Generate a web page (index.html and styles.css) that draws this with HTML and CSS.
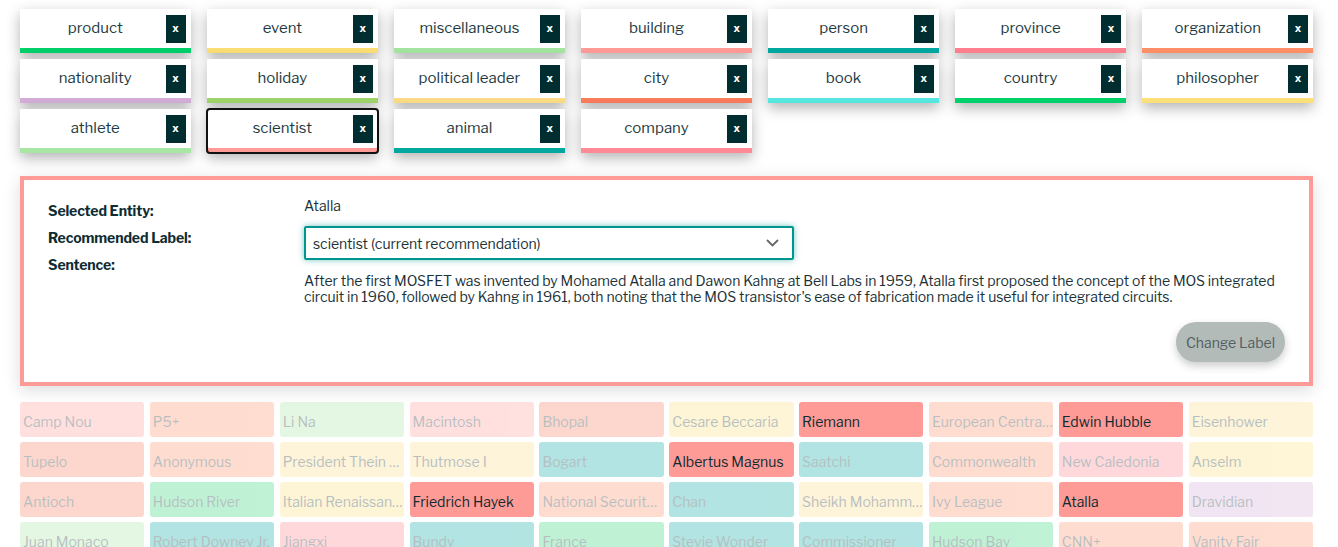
FILE: index.html
```html
<!DOCTYPE html>
<html lang="en">
<head>
<meta charset="utf-8">
<title>Entity Labeler</title>
<link rel="stylesheet" href="styles.css">
</head>
<body>
<div class="page">
  <div class="chips">
    <div class="chip c-product"><span class="chip-label">product</span><span class="chip-x">x</span></div>
    <div class="chip c-event"><span class="chip-label">event</span><span class="chip-x">x</span></div>
    <div class="chip c-misc"><span class="chip-label">miscellaneous</span><span class="chip-x">x</span></div>
    <div class="chip c-building"><span class="chip-label">building</span><span class="chip-x">x</span></div>
    <div class="chip c-person"><span class="chip-label">person</span><span class="chip-x">x</span></div>
    <div class="chip c-province"><span class="chip-label">province</span><span class="chip-x">x</span></div>
    <div class="chip c-organization"><span class="chip-label">organization</span><span class="chip-x">x</span></div>
    <div class="chip c-nationality"><span class="chip-label">nationality</span><span class="chip-x">x</span></div>
    <div class="chip c-holiday"><span class="chip-label">holiday</span><span class="chip-x">x</span></div>
    <div class="chip c-political"><span class="chip-label">political leader</span><span class="chip-x">x</span></div>
    <div class="chip c-city"><span class="chip-label">city</span><span class="chip-x">x</span></div>
    <div class="chip c-book"><span class="chip-label">book</span><span class="chip-x">x</span></div>
    <div class="chip c-country"><span class="chip-label">country</span><span class="chip-x">x</span></div>
    <div class="chip c-philosopher"><span class="chip-label">philosopher</span><span class="chip-x">x</span></div>
    <div class="chip c-athlete"><span class="chip-label">athlete</span><span class="chip-x">x</span></div>
    <div class="chip c-scientist selected"><span class="chip-label">scientist</span><span class="chip-x">x</span></div>
    <div class="chip c-animal"><span class="chip-label">animal</span><span class="chip-x">x</span></div>
    <div class="chip c-company"><span class="chip-label">company</span><span class="chip-x">x</span></div>
  </div>

  <div class="panel">
    <div class="panel-labels">
      <div class="plabel">Selected Entity:</div>
      <div class="plabel">Recommended Label:</div>
      <div class="plabel">Sentence:</div>
    </div>
    <div class="panel-body">
      <div class="entity">Atalla</div>
      <div class="select">
        <span class="select-text">scientist (current recommendation)</span>
        <svg class="chev" width="13" height="8" viewBox="0 0 13 8"><polyline points="1,1 6.5,6.5 12,1" fill="none" stroke="#666" stroke-width="1.8"/></svg>
      </div>
      <p class="sentence">After the first MOSFET was invented by Mohamed Atalla and Dawon Kahng at Bell Labs in 1959, Atalla first proposed the concept of the MOS integrated circuit in 1960, followed by Kahng in 1961, both noting that the MOS transistor's ease of fabrication made it useful for integrated circuits.</p>
      <div class="actions"><button class="btn">Change Label</button></div>
    </div>
  </div>

  <div class="cells">
    <div class="cell c-building">Camp Nou</div>
    <div class="cell c-organization">P5+</div>
    <div class="cell c-athlete">Li Na</div>
    <div class="cell c-building">Macintosh</div>
    <div class="cell c-city">Bhopal</div>
    <div class="cell c-philosopher">Cesare Beccaria</div>
    <div class="cell c-scientist active">Riemann</div>
    <div class="cell c-organization">European Central Bank</div>
    <div class="cell c-scientist active">Edwin Hubble</div>
    <div class="cell c-political">Eisenhower</div>

    <div class="cell c-city">Tupelo</div>
    <div class="cell c-organization">Anonymous</div>
    <div class="cell c-political">President Thein Sein</div>
    <div class="cell c-political">Thutmose I</div>
    <div class="cell c-person">Bogart</div>
    <div class="cell c-scientist active">Albertus Magnus</div>
    <div class="cell c-person">Saatchi</div>
    <div class="cell c-organization">Commonwealth</div>
    <div class="cell c-province">New Caledonia</div>
    <div class="cell c-philosopher">Anselm</div>

    <div class="cell c-city">Antioch</div>
    <div class="cell c-country">Hudson River</div>
    <div class="cell c-philosopher">Italian Renaissance</div>
    <div class="cell c-scientist active">Friedrich Hayek</div>
    <div class="cell c-organization">National Security Agency</div>
    <div class="cell c-person">Chan</div>
    <div class="cell c-political">Sheikh Mohammed</div>
    <div class="cell c-organization">Ivy League</div>
    <div class="cell c-scientist active">Atalla</div>
    <div class="cell c-nationality">Dravidian</div>

    <div class="cell c-athlete">Juan Monaco</div>
    <div class="cell c-person">Robert Downey Jr.</div>
    <div class="cell c-province">Jiangxi</div>
    <div class="cell c-person">Bundy</div>
    <div class="cell c-country">France</div>
    <div class="cell c-person">Stevie Wonder</div>
    <div class="cell c-person">Commissioner</div>
    <div class="cell c-country">Hudson Bay</div>
    <div class="cell c-organization">CNN+</div>
    <div class="cell c-organization">Vanity Fair</div>
  </div>
</div>
</body>
</html>
```

FILE: styles.css
```css
* { box-sizing: border-box; }

html, body {
  margin: 0;
  padding: 0;
  background: #ffffff;
  overflow: hidden;
}

body {
  font-family: "Libre Franklin", "Inter", "Lato", "Liberation Sans", sans-serif;
  color: #1c3238;
}

.page {
  width: 1293px;
  margin-left: 20px;
  padding-top: 9px;
}

/* category colours */
.c-product { --c: #00d26a; }
.c-event { --c: #fbdd75; }
.c-misc { --c: #a4e4a0; }
.c-building { --c: #ff9b96; }
.c-person { --c: #00a8a0; }
.c-province { --c: #ff7f8e; }
.c-organization { --c: #ff8f66; }
.c-nationality { --c: #d4acd8; }
.c-holiday { --c: #9ed36a; }
.c-political { --c: #fbdb86; }
.c-city { --c: #f97c5c; }
.c-book { --c: #55e6e0; }
.c-country { --c: #2ed477; }
.c-philosopher { --c: #fbe07a; }
.c-athlete { --c: #a8e6a3; }
.c-scientist { --c: #ff9b96; }
.c-animal { --c: #00a8a0; }
.c-company { --c: #ff8a95; }

/* chips */
.chips {
  display: grid;
  grid-template-columns: repeat(7, 1fr);
  column-gap: 16.5px;
  row-gap: 6px;
}

.chip {
  height: 44px;
  background: #fff;
  display: flex;
  align-items: center;
  padding-bottom: 6px;
  box-shadow: inset 0 -5px 0 var(--c), 0 5px 13px rgba(0, 0, 0, 0.3);
}

.chip.c-country,
.chip.c-product { --c: #00d06a; }

.chip.selected {
  outline: 2px solid #111;
  outline-offset: -1px;
  border-radius: 3px;
}

.chip-label {
  flex: 1;
  text-align: center;
  padding-left: 5px;
  font-size: 15px;
  color: #1d3a42;
}

.chip-x {
  width: 20px;
  height: 28px;
  margin-right: 5px;
  margin-top: 1px;
  background: #002d30;
  color: #fff;
  font-family: "DejaVu Sans", sans-serif;
  font-weight: bold;
  font-size: 10px;
  display: flex;
  align-items: center;
  justify-content: center;
}

/* panel */
.panel {
  margin-top: 23px;
  height: 210px;
  border: 4px solid #ff9b96;
  background: #fff;
  box-shadow: 0 4px 16px rgba(0, 0, 0, 0.14);
  padding: 17px 24px 19px 24px;
  display: grid;
  grid-template-columns: 256px 1fr;
}

.panel-labels { display: flex; flex-direction: column; }

.plabel {
  font-size: 14px;
  font-weight: 700;
  line-height: 27px;
  color: #0f2c33;
  letter-spacing: -0.1px;
}

.panel-body { display: flex; flex-direction: column; }

.entity {
  font-size: 14px;
  line-height: 18px;
  color: #1c3238;
}

.select {
  margin-top: 11px;
  width: 490px;
  height: 34px;
  border: 2px solid #00968f;
  border-radius: 2px;
  box-shadow: 0 0 6px rgba(0, 150, 143, 0.55);
  display: flex;
  align-items: center;
  justify-content: space-between;
  padding: 0 13px 0 7px;
}

.select-text { font-size: 14px; color: #1c3238; letter-spacing: -0.05px; }

.sentence {
  margin: 13px 0 0 0;
  font-size: 14px;
  line-height: 16px;
  color: #1c3238;
  letter-spacing: -0.07px;
}

.actions {
  margin-top: 17px;
  display: flex;
  justify-content: flex-end;
}

.btn {
  height: 40px;
  width: 109px;
  border: none;
  border-radius: 20px;
  background: #b3bbb9;
  color: #525e60;
  font-family: inherit;
  font-size: 14px;
  box-shadow: 0 4px 8px rgba(0, 0, 0, 0.2);
  padding: 0;
}

/* cells */
.cells {
  margin-top: 16px;
  display: grid;
  grid-template-columns: repeat(10, 1fr);
  column-gap: 5.5px;
  row-gap: 5.5px;
}

.cell {
  height: 34.5px;
  border-radius: 3px;
  background: var(--c);
  opacity: 0.3;
  font-size: 14px;
  line-height: 39px;
  padding-left: 3px;
  color: #0f2c33;
  white-space: nowrap;
  overflow: hidden;
  text-overflow: ellipsis;
}

.cell.active { opacity: 1; }
```
